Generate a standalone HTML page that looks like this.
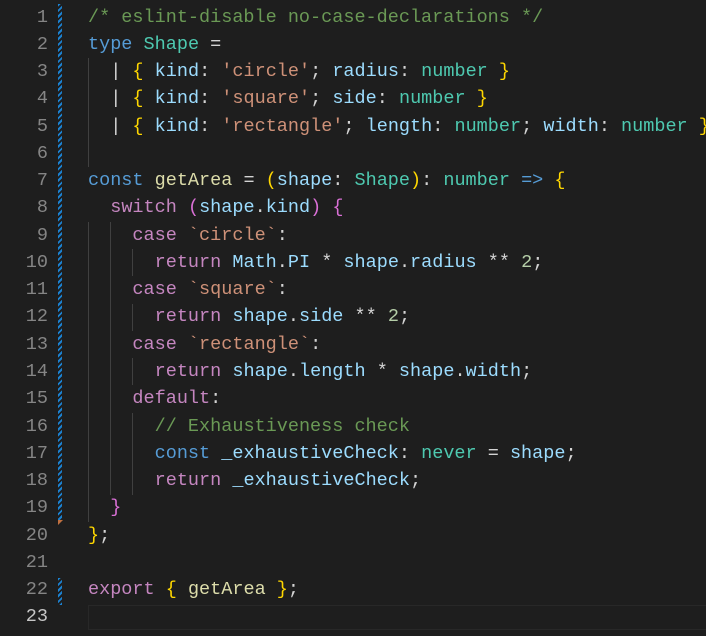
<!DOCTYPE html>
<html><head><meta charset="utf-8"><style>
body{margin:0;background:#1e1e1e;width:706px;height:636px;overflow:hidden;position:relative;font-family:"Liberation Mono",monospace;font-size:18.5px}
.l{position:absolute;left:88px;height:27.27px;line-height:27.27px;white-space:pre;color:#d4d4d4}
.n{position:absolute;left:0;width:48px;text-align:right;height:27.27px;line-height:27.27px;color:#858585;font-family:"Liberation Mono",monospace}
.g{position:absolute;width:1px;background:#404040}
.m{position:absolute;left:58px;width:4px;background:repeating-linear-gradient(135deg,#1b81d0 0 2px,#1e1e1e 2px 4px)}
.c{color:#6a9955}.k{color:#569cd6}.t{color:#4ec9b0}.p{color:#9cdcfe}.s{color:#ce9178}.nu{color:#b5cea8}.x{color:#c586c0}.f{color:#dcdcaa}.y{color:#ffd700}.o{color:#da70d6}
</style></head><body>
<div class="m" style="top:4px;height:516px"></div>
<div class="m" style="top:578px;height:27px"></div>
<div style="position:absolute;left:58px;top:520px;width:0;height:0;border-left:5px solid #c07040;border-bottom:5px solid transparent"></div>
<div style="position:absolute;left:88px;top:605px;width:620px;height:25px;border:1px solid #282828;box-sizing:border-box;border-right:none"></div>
<div class="g" style="left:88px;top:58px;height:109px"></div>
<div class="g" style="left:88px;top:222px;height:300px"></div>
<div class="g" style="left:110px;top:222px;height:273px"></div>
<div class="g" style="left:132px;top:249px;height:27px"></div>
<div class="g" style="left:132px;top:304px;height:27px"></div>
<div class="g" style="left:132px;top:358px;height:27px"></div>
<div class="g" style="left:132px;top:413px;height:82px"></div>
<div id="w"></div>
<script>
var L=[
'<span class="c">/* eslint-disable no-case-declarations */</span>',
'<span class="k">type</span> <span class="t">Shape</span> =',
'  | <span class="y">{</span> <span class="p">kind</span>: <span class="s">\'circle\'</span>; <span class="p">radius</span>: <span class="t">number</span> <span class="y">}</span>',
'  | <span class="y">{</span> <span class="p">kind</span>: <span class="s">\'square\'</span>; <span class="p">side</span>: <span class="t">number</span> <span class="y">}</span>',
'  | <span class="y">{</span> <span class="p">kind</span>: <span class="s">\'rectangle\'</span>; <span class="p">length</span>: <span class="t">number</span>; <span class="p">width</span>: <span class="t">number</span> <span class="y">}</span>',
'',
'<span class="k">const</span> <span class="f">getArea</span> = <span class="y">(</span><span class="p">shape</span>: <span class="t">Shape</span><span class="y">)</span>: <span class="t">number</span> <span class="k">=&gt;</span> <span class="y">{</span>',
'  <span class="x">switch</span> <span class="o">(</span><span class="p">shape</span>.<span class="p">kind</span><span class="o">)</span> <span class="o">{</span>',
'    <span class="x">case</span> <span class="s">`circle`</span>:',
'      <span class="x">return</span> <span class="p">Math</span>.<span class="p">PI</span> * <span class="p">shape</span>.<span class="p">radius</span> ** <span class="nu">2</span>;',
'    <span class="x">case</span> <span class="s">`square`</span>:',
'      <span class="x">return</span> <span class="p">shape</span>.<span class="p">side</span> ** <span class="nu">2</span>;',
'    <span class="x">case</span> <span class="s">`rectangle`</span>:',
'      <span class="x">return</span> <span class="p">shape</span>.<span class="p">length</span> * <span class="p">shape</span>.<span class="p">width</span>;',
'    <span class="x">default</span>:',
'      <span class="c">// Exhaustiveness check</span>',
'      <span class="k">const</span> <span class="p">_exhaustiveCheck</span>: <span class="t">never</span> = <span class="p">shape</span>;',
'      <span class="x">return</span> <span class="p">_exhaustiveCheck</span>;',
'  <span class="o">}</span>',
'<span class="y">}</span>;',
'',
'<span class="x">export</span> <span class="y">{</span> <span class="f">getArea</span> <span class="y">}</span>;',
''];
var h='';
for(var i=0;i<L.length;i++){var t=(3.5+i*27.27).toFixed(2);
h+='<div class="n" style="top:'+t+'px'+(i==22?';color:#c6c6c6':'')+'">'+(i+1)+'</div><div class="l" style="top:'+t+'px">'+L[i]+'</div>';}
document.getElementById('w').innerHTML=h;
</script>
</body></html>
